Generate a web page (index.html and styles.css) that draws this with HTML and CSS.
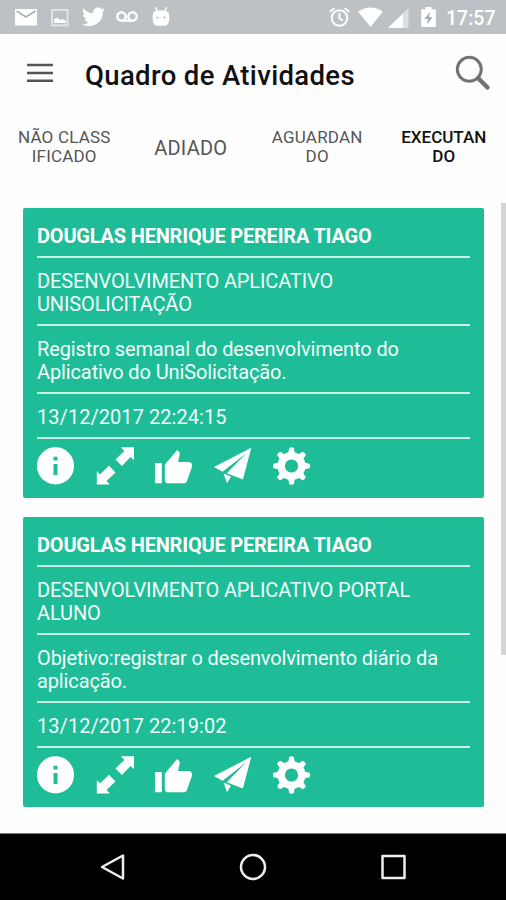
FILE: index.html
```
<!DOCTYPE html>
<html lang="pt-BR">
<head>
  <meta charset="UTF-8" />
  <meta name="viewport" content="width=device-width, initial-scale=1" />
  <title>Quadro de Atividades</title>
  <link rel="stylesheet" href="styles.css">
</head>
<body>
  <!-- icons shared by the cards -->
  <svg class="sprite" width="0" height="0">
    <symbol id="info" viewBox="0 0 38 38">
      <path fill-rule="evenodd" d="M18.500.2a18.600 18.600 0 1 0 0 37.200 18.600 18.600 0 0 0 0-37.200zM16.500 9.800h4v3.800h-4zM16.500 17h4v11h-4z"/>
    </symbol>
    <symbol id="expand" viewBox="0 0 38 38">
      <path d="M25 .3h13v13l-3.500-3.200-8.600 8.900-6.400-6.500 8.800-8.600zM13.800 37.400H.8v-13.200l3.400 3 8.800-8.400 6.500 6.600-9 8.700z"/>
    </symbol>
    <symbol id="like" viewBox="0 0 38 38">
      <path d="M0 16h6.800v20.300H0zM9.800 18.800c0-1 .4-1.800 1-2.400L22.200 3l1.800 1.700c.5.500.8 1.200.8 2l-1.700 8.400h10.700c1.900 0 3.300 1.500 3.300 3.400 0 .5 0 1-.2 1.400l-5 14.300c-.5 1.200-1.700 2.100-3.100 2.100H13.200c-1.900 0-3.400-1.500-3.400-3.400z"/>
    </symbol>
    <symbol id="send" viewBox="0 0 38 38">
      <path d="M37.300.7 0 20l8.500 4.700L32 6.500 12.800 26.300 28.900 32.500z"/>
      <path d="M9.600 26.500 17 29.800l-4 6.400z"/>
    </symbol>
    <symbol id="gear" viewBox="0 0 38 38">
      <path id="tooth" d="M14.800 8 16.200 1q2.300-1.400 4.600 0L22.200 8z"/>
      <use href="#tooth" transform="rotate(45 18.500 19)"/>
      <use href="#tooth" transform="rotate(90 18.500 19)"/>
      <use href="#tooth" transform="rotate(135 18.500 19)"/>
      <use href="#tooth" transform="rotate(180 18.500 19)"/>
      <use href="#tooth" transform="rotate(225 18.500 19)"/>
      <use href="#tooth" transform="rotate(270 18.500 19)"/>
      <use href="#tooth" transform="rotate(315 18.500 19)"/>
      <circle cx="18.500" cy="19" r="10.300" fill="none" stroke="#fff" stroke-width="7.400"/>
    </symbol>
  </svg>

  <div class="status-bar">
    <div class="status-left">
      <svg width="23" height="20" viewBox="0 0 23 20"><path fill="#fff" d="M0 2h22v16.500H0z"/><path d="m1.500 4 9.500 6 9.500-6" fill="none" stroke="#a9afb3" stroke-width="1.500"/></svg>
      <svg width="18" height="20" viewBox="0 0 18 20"><path d="M1 2.800h15.500v15.500H1z" fill="none" stroke="#e4e7e9" stroke-width="1.800"/><path fill="#fff" d="M3 16v-4l3.500-1.500 2.500 2.500 2-1 4 2v2z"/></svg>
      <svg width="23" height="20" viewBox="0 0 24 20"><path fill="#fff" d="M24 2.400a10 10 0 0 1-2.800.8A5 5 0 0 0 23.300.5a10 10 0 0 1-3.100 1.200 4.900 4.900 0 0 0-8.400 4.500A14 14 0 0 1 1.700 1a4.900 4.900 0 0 0 1.500 6.600A5 5 0 0 1 1 7c0 2.300 1.600 4.400 3.900 4.900a5 5 0 0 1-2.200.1 4.900 4.900 0 0 0 4.600 3.400A9.900 9.900 0 0 1 0 17.400a14 14 0 0 0 21.500-12.500A10 10 0 0 0 24 2.400z"/></svg>
      <svg class="voicemail" width="22" height="20" viewBox="0 0 22 20"><g fill="none" stroke="#fff" stroke-width="2.400"><circle cx="5.500" cy="9.500" r="4.200"/><circle cx="16.500" cy="9.500" r="4.200"/><path d="M5.500 13.700h11"/></g></svg>
      <svg width="18" height="20" viewBox="0 0 18 20"><path fill="#fff" d="M1 6q1.500-2 4-2.500h8Q15.500 4 17 6l.4 5q-.2 7-4 7.700H4.400Q.8 18 .6 11z"/><path d="M3.300 0 5.500 5M14.700 0l-2.200 5" stroke="#fff" stroke-width="1.500"/><circle cx="5.500" cy="10.500" r="1" fill="#a9afb3"/><circle cx="12.500" cy="10.500" r="1" fill="#a9afb3"/></svg>
    </div>
    <div class="status-right">
      <svg class="alarm" width="21" height="20" viewBox="0 0 21 20"><g fill="none" stroke="#fff" stroke-width="2"><circle cx="10.500" cy="11" r="7.800"/><path d="M.8 4.800 5.500 1M20.200 4.800 15.500 1M10.500 6v5.500l3.500 2"/></g></svg>
      <svg class="wifi" width="25" height="20" viewBox="0 0 25 20"><path fill="#fff" d="M0 4.500Q12.500-3.500 25 4.500L12.500 20z"/></svg>
      <svg class="signal" width="21" height="21" viewBox="0 0 21 21"><path fill="#dde0e2" d="M20.500 1v20H0z"/><path fill="#fff" d="M15 6.500V21H0z"/></svg>
      <svg class="battery" width="15" height="20" viewBox="0 0 15 20"><path fill="#fff" d="M4.500 0h6v2.300H14q.8 0 .8 1V19q0 1-.8 1H1q-.8 0-.8-1V3.300q0-1 .8-1h3.500z"/><path fill="#a4abaf" d="M9 5 3.500 12H7l-1 5.500 5.500-7.200H8z"/></svg>
      <span class="time">17:57</span>
    </div>
  </div>

  <div class="header">
    <svg width="26" height="20" viewBox="0 0 26 20"><path d="M0 2h26M0 10h26M0 17.800h26" stroke="#555" stroke-width="2.400"/></svg>
    <h1>Quadro de Atividades</h1>
    <svg class="search" width="36" height="36" viewBox="0 0 36 36"><circle cx="14.300" cy="14.300" r="12" fill="none" stroke="#737373" stroke-width="3"/><path d="m23 23 9.500 9.500" stroke="#737373" stroke-width="4.500" stroke-linecap="round"/></svg>
  </div>

  <div class="tabs">
    <div class="tab">NÃO CLASS<br>IFICADO</div>
    <div class="tab tab-large">ADIADO</div>
    <div class="tab">AGUARDAN<br>DO</div>
    <div class="tab active">EXECUTAN<br>DO</div>
  </div>

  <div class="content">
    <div class="card">
      <div class="row name">DOUGLAS HENRIQUE PEREIRA TIAGO</div>
      <div class="row">DESENVOLVIMENTO APLICATIVO<br>UNISOLICITAÇÃO</div>
      <div class="row">Registro semanal do desenvolvimento do<br>Aplicativo do UniSolicitação.</div>
      <div class="row date">13/12/2017 22:24:15</div>
      <div class="actions">
        <svg><use href="#info"/></svg>
        <svg><use href="#expand"/></svg>
        <svg><use href="#like"/></svg>
        <svg><use href="#send"/></svg>
        <svg><use href="#gear"/></svg>
      </div>
    </div>
    <div class="card">
      <div class="row name">DOUGLAS HENRIQUE PEREIRA TIAGO</div>
      <div class="row">DESENVOLVIMENTO APLICATIVO PORTAL<br>ALUNO</div>
      <div class="row">Objetivo:registrar o desenvolvimento diário da<br>aplicação.</div>
      <div class="row date">13/12/2017 22:19:02</div>
      <div class="actions">
        <svg><use href="#info"/></svg>
        <svg><use href="#expand"/></svg>
        <svg><use href="#like"/></svg>
        <svg><use href="#send"/></svg>
        <svg><use href="#gear"/></svg>
      </div>
    </div>
    <div class="scrollbar"></div>
  </div>

  <div class="nav-bar">
    <svg width="28" height="28" viewBox="0 0 28 28"><path d="M3 14 24 2.500v23z"/></svg>
    <svg width="28" height="28" viewBox="0 0 28 28"><circle cx="14" cy="14" r="12"/></svg>
    <svg width="28" height="28" viewBox="0 0 28 28"><path d="M3.500 3h22v22h-22z"/></svg>
  </div>
</body>
</html>
```
FILE: styles.css
```
* {
  box-sizing: border-box;
}
body {
  margin: 0;
  height: 900px;
  display: flex;
  flex-direction: column;
  overflow: hidden;
  background: #fefefe;
  font-family: Roboto, sans-serif;
}
svg {
  display: block;
  flex: none;
}
.sprite {
  position: absolute;
}
.status-bar {
  height: 34px;
  flex: none;
  display: flex;
  justify-content: space-between;
  background: #bcc1c5;
  padding: 7px 11px 0 15px;
}
.status-left {
  display: flex;
  gap: 13px;
}
.voicemail {
  margin: 0 1px 0 -2px;
}
.status-right {
  display: flex;
}
.alarm {
  margin-right: 8px;
}
.wifi {
  margin-right: 5px;
}
.signal {
  margin-right: 12px;
}
.battery {
  margin-right: 10px;
}
.time {
  width: 49px;
  color: #fff;
  font-size: 19.500px;
  line-height: 24px;
  font-weight: 500;
}
.header {
  height: 80px;
  flex: none;
  display: flex;
  align-items: center;
  padding: 0 15px 2px 27px;
}
h1 {
  flex: 1;
  margin: 0 0 0 32px;
  padding-top: 4px;
  font-size: 27.500px;
  letter-spacing: 0.350px;
  font-weight: 500;
  color: #111;
  white-space: nowrap;
}
.tabs {
  height: 66px;
  flex: none;
  display: grid;
  grid-template-columns: repeat(4, 126.500px);
  align-items: center;
  padding-left: 1px;
}
.tab {
  text-align: center;
  font-size: 17px;
  line-height: 19px;
  letter-spacing: 0.200px;
  color: #555;
}
.tab-large {
  font-size: 20px;
  padding-top: 2px;
}
.active {
  color: #111;
  font-weight: 500;
  letter-spacing: 0;
}
.content {
  flex: 1;
  position: relative;
  padding: 28px 22px 0 23px;
}
.card {
  height: 290px;
  margin-bottom: 19px;
  padding: 5px 14px 0;
  background: #1fbc98;
  border-radius: 2px;
  color: #f0fffb;
}
.row {
  padding: 12px 0 8px;
  border-bottom: 2px solid #c5f2e5;
  font-size: 20px;
  line-height: 23px;
  letter-spacing: -0.120px;
  white-space: nowrap;
}
.name {
  font-weight: 700;
  letter-spacing: -0.200px;
  color: #fff;
}
.date {
  letter-spacing: 0.050px;
}
.actions {
  display: flex;
  gap: 21px;
  padding-top: 8px;
}
.actions svg {
  width: 38px;
  height: 38px;
  fill: #fff;
}
.scrollbar {
  position: absolute;
  top: 23px;
  right: 0;
  width: 5px;
  height: 452px;
  background: #d5d5d5;
}
.nav-bar {
  height: 67px;
  flex: none;
  display: flex;
  justify-content: center;
  align-items: center;
  gap: 112px;
  background: #000;
  border-top: 1px solid #777;
}
.nav-bar svg {
  fill: none;
  stroke: #eee;
  stroke-width: 2.500px;
  stroke-linejoin: round;
}
```
